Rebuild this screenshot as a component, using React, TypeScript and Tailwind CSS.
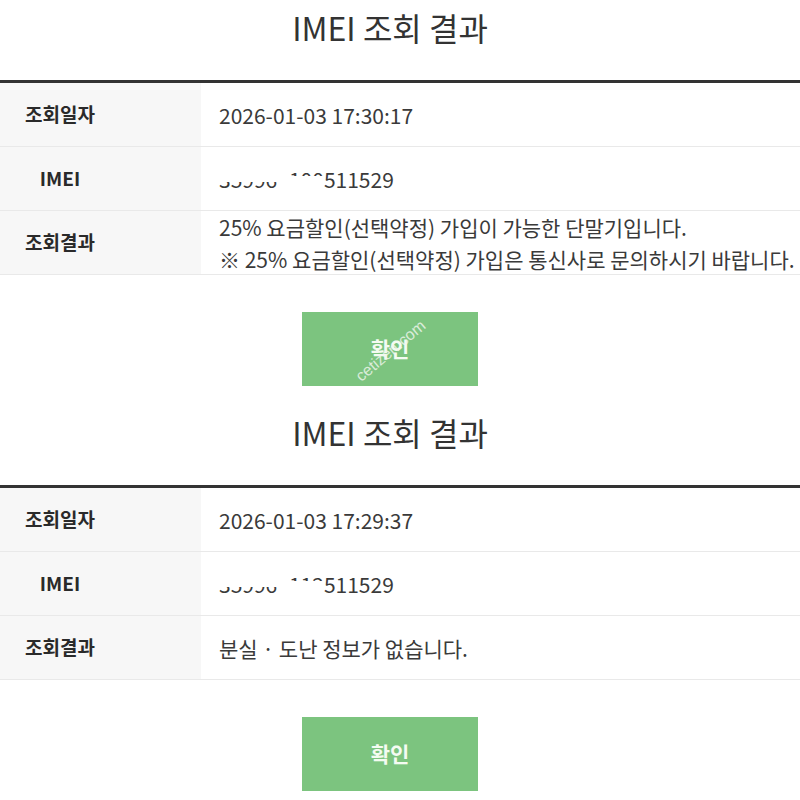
import React from "react";

const font = { fontFamily: '"Noto Sans CJK KR", "Noto Sans", sans-serif' };

interface Row {
    label: string;
    value: React.ReactNode;
}

// part of the digits is covered by a white patch, as in the capture
const Masked: React.FC<{ text: string; show: "top" | "bottom" }> = ({ text, show }) => (
    <span className="relative inline-block">
        {text}
        <span
            className={`absolute left-0 right-0 bg-white ${show === "bottom" ? "top-0 h-[60%]" : "bottom-0 h-[58%]"}`}
        />
    </span>
);

const Imei: React.FC<{ mid: string }> = ({ mid }) => (
    <span>
        <Masked text="35996" show="bottom" />
        <span className="text-white">0</span>
        <Masked text={mid} show="top" />
        511529
    </span>
);

const ResultBlock: React.FC<{ rows: Row[]; watermark?: boolean }> = ({ rows, watermark }) => (
    <section className="h-[405px]">
        <div className="h-[80px] pr-[20px]">
            <h2 className="text-center text-[32px] leading-[54px] text-[#333]">IMEI 조회 결과</h2>
        </div>
        <div className="border-t-[3px] border-[#333]">
            {rows.map((row, i) => (
                <div key={i} className="flex h-[64px] border-b border-[#e9e9e9]">
                    <div className="w-[201px] shrink-0 bg-[#f7f7f7] flex items-center">
                        <span className="w-[120px] text-center text-[19px] font-bold text-[#2a2a2a]">{row.label}</span>
                    </div>
                    <div className="flex-1 flex items-center pl-[18px] text-[21px] leading-[32px] text-[#3a3a3a] whitespace-nowrap">
                        {row.value}
                    </div>
                </div>
            ))}
        </div>
        <div className="flex justify-center pt-[37px] pr-[20px]">
            <div className="relative w-[176px] h-[74px] bg-[#7cc47f] flex items-center justify-center">
                <span className="text-[21px] font-bold text-[#f4fbf2]">확인</span>
                {watermark && (
                    <span
                        className="absolute left-[46px] top-[27px] text-[16px] text-[#f2f7f0] opacity-80 -rotate-[40deg] origin-center"
                        style={{ fontFamily: '"Liberation Sans", sans-serif' }}
                    >
                        cetizen.com
                    </span>
                )}
            </div>
        </div>
    </section>
);

const App: React.FC = () => {
    const first: Row[] = [
        { label: "조회일자", value: "2026-01-03 17:30:17" },
        { label: "IMEI", value: <Imei mid="100" /> },
        {
            label: "조회결과",
            value: (
                <div>
                    <div>25% 요금할인(선택약정) 가입이 가능한 단말기입니다.</div>
                    <div>※ 25% 요금할인(선택약정) 가입은 통신사로 문의하시기 바랍니다.</div>
                </div>
            ),
        },
    ];

    const second: Row[] = [
        { label: "조회일자", value: "2026-01-03 17:29:37" },
        { label: "IMEI", value: <Imei mid="112" /> },
        { label: "조회결과", value: "분실 · 도난 정보가 없습니다." },
    ];

    return (
        <div className="w-[800px] h-[800px] overflow-hidden bg-white" style={font}>
            <ResultBlock rows={first} watermark />
            <ResultBlock rows={second} />
        </div>
    );
};

export default App;
